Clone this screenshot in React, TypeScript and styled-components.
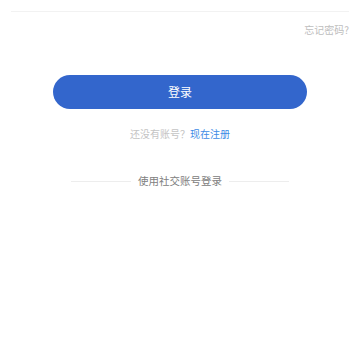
import styled, { createGlobalStyle } from 'styled-components';

const GlobalStyle = createGlobalStyle`
  html, body {
    margin: 0;
    padding: 0;
    background: #fff;
  }
  body {
    font-family: "Noto Sans CJK SC", "Noto Sans", sans-serif;
  }
`;

export default function App() {
  return (
    <>
      <GlobalStyle />
      <Page>
        <Field />
        <Forgot>忘记密码?</Forgot>
        <LoginButton>登录</LoginButton>
        <Register>
          还没有账号？<RegisterLink>现在注册</RegisterLink>
        </Register>
        <Divider>
          <Line />
          <DividerText>使用社交账号登录</DividerText>
          <Line />
        </Divider>
      </Page>
    </>
  );
}

const Page = styled.div`
  width: 360px;
  height: 360px;
  padding: 0 11px;
  box-sizing: border-box;
  display: flex;
  flex-direction: column;
`;

const Field = styled.div`
  height: 11px;
  border-bottom: 1px solid #f2f2f2;
`;

const Forgot = styled.div`
  margin-top: 11px;
  text-align: right;
  font-size: 10px;
  line-height: 14px;
  color: #bdbdbd;
`;

const LoginButton = styled.button`
  all: unset;
  box-sizing: border-box;
  margin: 38px auto 0;
  width: 254px;
  height: 34px;
  border-radius: 17px;
  background: #3366cc;
  color: #fff;
  font-size: 12px;
  text-align: center;
  line-height: 34px;
  font-family: "Noto Sans CJK SC", "Noto Sans", sans-serif;
`;

const Register = styled.div`
  margin-top: 18px;
  text-align: center;
  font-size: 10px;
  line-height: 14px;
  color: #c4c4c4;
`;

const RegisterLink = styled.span`
  color: #3d8be6;
`;

const Divider = styled.div`
  margin: 32px auto 0;
  width: 218px;
  height: 16px;
  display: flex;
  align-items: center;
  gap: 7px;
`;

const Line = styled.div`
  flex: 1;
  height: 1px;
  background: #ededed;
`;

const DividerText = styled.span`
  font-size: 10.5px;
  line-height: 16px;
  color: #808080;
  white-space: nowrap;
`;
